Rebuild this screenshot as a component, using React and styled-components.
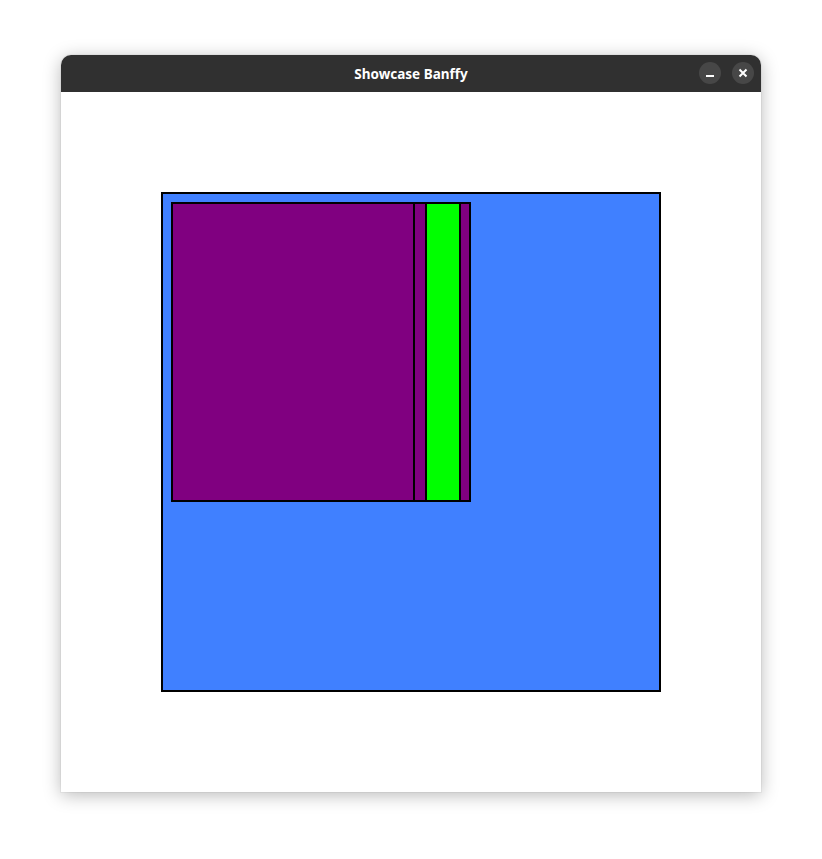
import styled, { createGlobalStyle } from 'styled-components'

const GlobalStyle = createGlobalStyle`
  html, body {
    margin: 0;
    padding: 0;
    background: #ffffff;
  }
`

const Page = styled.div`
  padding: 55px 61px 67px;
`

const Window = styled.div`
  width: 700px;
  border-radius: 10px 10px 0 0;
  box-shadow: 0 3px 18px rgba(0, 0, 0, 0.28), 0 0 0 1px rgba(0, 0, 0, 0.04);
  background: #ffffff;
`

const TitleBar = styled.div`
  position: relative;
  height: 37px;
  background: #303030;
  border-radius: 10px 10px 0 0;
  display: flex;
  align-items: center;
  justify-content: center;
`

const Title = styled.span`
  color: #ffffff;
  font-family: "Noto Sans", "Open Sans", sans-serif;
  font-weight: 700;
  font-size: 13.5px;
`

const Controls = styled.div`
  position: absolute;
  right: 7px;
  top: 7px;
  display: flex;
  gap: 11px;
`

const RoundButton = styled.div`
  width: 22px;
  height: 22px;
  border-radius: 50%;
  background: #474747;
  display: flex;
  align-items: center;
  justify-content: center;
`

const Content = styled.div`
  padding: 100px;
`

const Canvas = styled.div`
  box-sizing: border-box;
  width: 500px;
  height: 500px;
  padding: 8px;
  background: #4080ff;
  border: 2px solid #000000;
`

const Panel = styled.div`
  box-sizing: border-box;
  width: 300px;
  height: 300px;
  background: #800080;
  border: 2px solid #000000;
  display: flex;
`

const Viewport = styled.div`
  width: 240px;
  border-right: 2px solid #000000;
`

const Thumb = styled.div`
  width: 32px;
  margin: 0 8px 0 10px;
  background: #00ff00;
  border-left: 2px solid #000000;
  border-right: 2px solid #000000;
`

export default function App() {
  return (
    <>
      <GlobalStyle />
      <Page>
        <Window>
          <TitleBar>
            <Title>Showcase Banffy</Title>
            <Controls>
              <RoundButton>
                <svg width="10" height="10" viewBox="0 0 10 10">
                  <rect x="1" y="7" width="8" height="2" fill="#ffffff" />
                </svg>
              </RoundButton>
              <RoundButton>
                <svg width="10" height="10" viewBox="0 0 10 10">
                  <path d="M1.5 1.5 L8.5 8.5 M8.5 1.5 L1.5 8.5" stroke="#ffffff" strokeWidth="2" />
                </svg>
              </RoundButton>
            </Controls>
          </TitleBar>
          <Content>
            <Canvas>
              <Panel>
                <Viewport />
                <Thumb />
              </Panel>
            </Canvas>
          </Content>
        </Window>
      </Page>
    </>
  )
}
